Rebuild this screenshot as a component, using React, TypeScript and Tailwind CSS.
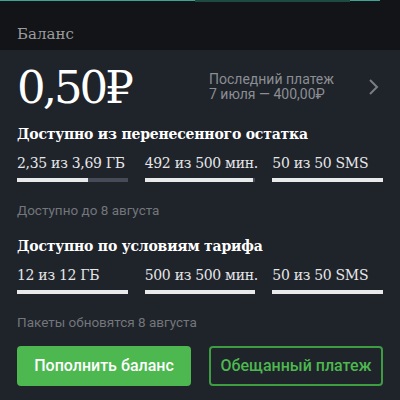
const slab = "font-['DejaVu_Serif','Liberation_Serif',serif]";
const sans = "font-['Roboto','Liberation_Sans',sans-serif]";

type Item = { label: string; pct: number };

const carried: Item[] = [
  { label: "2,35 из 3,69 ГБ", pct: 64 },
  { label: "492 из 500 мин.", pct: 98 },
  { label: "50 из 50 SMS", pct: 100 },
];

const tariff: Item[] = [
  { label: "12 из 12 ГБ", pct: 100 },
  { label: "500 из 500 мин.", pct: 100 },
  { label: "50 из 50 SMS", pct: 100 },
];

function Section({ title, items, note }: { title: string; items: Item[]; note: string }) {
  return (
    <div>
      <h3 className={`${slab} text-[14px] font-bold text-white leading-5 tracking-[-0.2px]`}>{title}</h3>
      <div className="grid grid-cols-3 gap-[17px] mt-[9px]">
        {items.map((it, i) => (
          <div key={i}>
            <div className={`${slab} text-[14px] text-[#e6e7e9] leading-5 tracking-[-0.3px] whitespace-nowrap`}>
              {it.label}
            </div>
            <div className="mt-[5px] h-[4px] w-full bg-[#474b58]">
              <div className="h-full bg-[#e8e9eb]" style={{ width: `${it.pct}%` }} />
            </div>
          </div>
        ))}
      </div>
      <p className={`${sans} text-[13.5px] text-[#73767b] mt-[18px] leading-5`}>{note}</p>
    </div>
  );
}

export default function App() {
  return (
    <div className="w-[400px] h-[400px] overflow-hidden bg-[#1f232a]">
      <div className="h-[50px] bg-[#121417] relative">
        <div className="absolute top-0 left-0 h-[1px] w-[380px] bg-[#3aa596]" />
        <div className="absolute top-0 left-[195px] h-[2px] w-[155px] bg-[#1e4a44]" />
        <div className={`${slab} text-[15px] text-[#9b9c9e] pl-[17px] pt-[24px] leading-5`}>Баланс</div>
      </div>
      <div className="px-[17px]">
        <div className="flex items-center h-[74px]">
          <div className={`${slab} text-[45px] text-white leading-none w-[192px] tracking-[-3px]`}>0,50₽</div>
          <div className={`${sans} text-[14px] text-[#8b8e93] leading-[15px] flex-1`}>
            <div>Последний платеж</div>
            <div>7 июля — 400,00₽</div>
          </div>
          <svg width="12" height="18" viewBox="0 0 12 18" className="mr-[3px]">
            <path d="M2 2 L9 9 L2 16" fill="none" stroke="#7a7d83" strokeWidth="2" />
          </svg>
        </div>
        <Section title="Доступно из перенесенного остатка" items={carried} note="Доступно до 8 августа" />
        <div className="mt-[16px]">
          <Section title="Доступно по условиям тарифа" items={tariff} note="Пакеты обновятся 8 августа" />
        </div>
        <div className="grid grid-cols-2 gap-[18px] mt-[14px]">
          <button className={`${sans} h-[40px] rounded-[4px] bg-[#4cb84f] text-white text-[16px] font-medium`}>
            Пополнить баланс
          </button>
          <button className={`${sans} h-[40px] rounded-[4px] border-2 border-[#3e9c41] text-[#4cb84f] text-[16px] font-medium`}>
            Обещанный платеж
          </button>
        </div>
      </div>
    </div>
  );
}
